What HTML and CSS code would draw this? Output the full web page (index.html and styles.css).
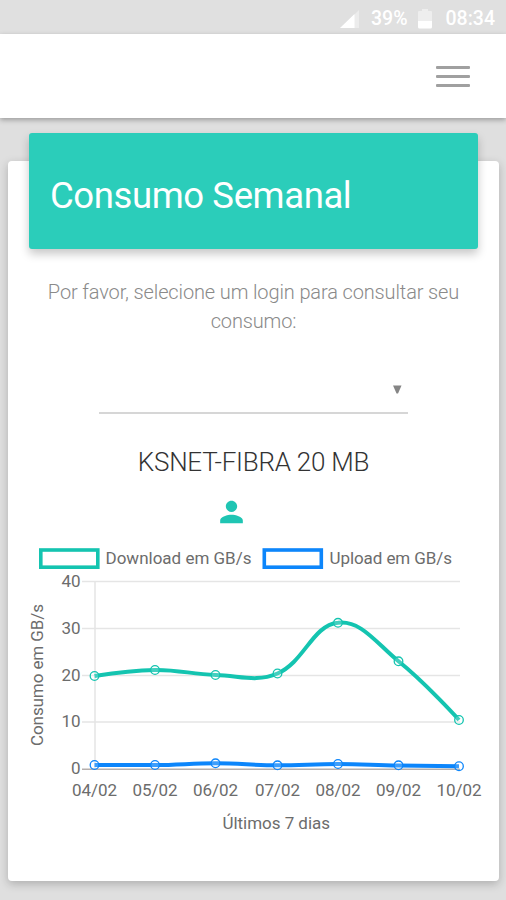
FILE: index.html
```html
<!DOCTYPE html>
<html lang="pt-BR">
<head>
<meta charset="utf-8">
<title>Consumo Semanal</title>
<link rel="stylesheet" href="styles.css">
</head>
<body>
<header class="status">
  <svg class="signal" width="20" height="20" viewBox="0 0 20 20"><path d="M19 1V19H1Z" fill="#ececec"/><path d="M14.500 5V19H0Z" fill="#fff"/></svg>
  <span class="battery-text">39%</span>
  <svg class="battery" width="14" height="20" viewBox="0 0 14 20"><path d="M4 0h6v2h3a1 1 0 0 1 1 1v9H0V3a1 1 0 0 1 1-1h3z" fill="#eee"/><path d="M0 12h14v6a1.500 1.500 0 0 1-1.500 1.500h-11A1.500 1.500 0 0 1 0 18z" fill="#fff"/></svg>
  <span class="clock">08:34</span>
</header>
<nav class="navbar">
  <button class="menu" aria-label="Menu"><span></span><span></span><span></span></button>
</nav>
<main>
  <section class="card">
    <h1 class="banner"><span>Consumo Semanal</span></h1>
    <p class="hint">Por favor, selecione um login para consultar seu<br>consumo:</p>
    <div class="select"><svg width="9" height="9" viewBox="0 0 9 9"><path d="M0 .5h8.500L5 8.500H3.500z" fill="#858585"/></svg></div>
    <h2 class="plan"><span>KSNET-FIBRA 20 MB</span></h2>
    <svg class="person" width="35" height="34" viewBox="0 0 24 24"><path fill="#1fc5b3" d="M12 12c2.210 0 4-1.790 4-4s-1.790-4-4-4-4 1.790-4 4 1.790 4 4 4zm0 2c-2.670 0-8 1.340-8 4v2h16v-2c0-2.660-5.330-4-8-4z"/></svg>
    <svg class="chart" width="470" height="300" viewBox="20 540 470 300">
      <g fill="#fff" stroke-width="3.600">
        <rect x="40.800" y="550" width="57" height="17.200" stroke="#14c4b0"/>
        <rect x="264.300" y="550" width="57" height="17.200" stroke="#0d86fb"/>
      </g>
      <g class="label">
        <text x="105.500" y="564" textLength="146">Download em GB/s</text>
        <text x="329.500" y="564" textLength="122.500">Upload em GB/s</text>
        <text transform="translate(42.500 746) rotate(-90)" textLength="142">Consumo em GB/s</text>
        <text x="222.500" y="828.500" textLength="107.500">Últimos 7 dias</text>
      </g>
      <g class="grid">
        <path d="M82 581.500H460M82 628.500H460M82 675.500H460M82 722H460M95 581V769"/>
        <path class="zero" d="M82 769.300H460"/>
      </g>
      <g class="label end">
        <text x="80.500" y="586.500">40</text><text x="80.500" y="633.500">30</text><text x="80.500" y="680.500">20</text><text x="80.500" y="727">10</text><text x="80.500" y="774">0</text>
      </g>
      <g class="label mid">
        <text x="94.500" y="796">04/02</text><text x="155" y="796">05/02</text><text x="215.500" y="796">06/02</text><text x="277.500" y="796">07/02</text><text x="338" y="796">08/02</text><text x="398.500" y="796">09/02</text><text x="459" y="796">10/02</text>
      </g>
      <g class="series" stroke="#0d86fb">
        <path d="M94.500 765L155 765C179 765 191 763.300 215.500 763.300S253 765.300 277.500 765.300S313 764 338 764S374 765.200 398.500 765.400L459 766.200"/>
        <g class="dots"><circle cx="94.500" cy="765" r="4.300"/><circle cx="155" cy="765" r="4.300"/><circle cx="215.500" cy="763.300" r="4.300"/><circle cx="277.500" cy="765.300" r="4.300"/><circle cx="338" cy="764" r="4.300"/><circle cx="398.500" cy="765.300" r="4.300"/><circle cx="459" cy="766.200" r="4.300"/></g>
      </g>
      <g class="series" stroke="#14c4b0">
        <path d="M94.500 676C94.500 676 130.700 670.200 155 669.900S191.500 674.300 215.700 675C240.400 675.700 255.800 682.600 277.500 673.500C304.600 661.600 312.500 625.100 338 622.800C361.100 620.100 376.200 643 398.500 661.300C424.600 682.100 459 720 459 720"/>
        <g class="dots"><circle cx="94.500" cy="676" r="4.300"/><circle cx="155" cy="670" r="4.300"/><circle cx="215.500" cy="675" r="4.300"/><circle cx="277.500" cy="673.500" r="4.300"/><circle cx="338" cy="622.800" r="4.300"/><circle cx="398.500" cy="661.300" r="4.300"/><circle cx="459" cy="720" r="4.300"/></g>
      </g>
    </svg>
  </section>
</main>
</body>
</html>
```
FILE: styles.css
```css
* { box-sizing: border-box; }
body { margin: 0; height: 900px; overflow: hidden; background: #dfdfdf; font-family: Roboto, sans-serif; }
.status { height: 34px; background: #e0e0e0; color: #fff; display: flex; align-items: center; justify-content: flex-end; padding: 3px 11px 0 0; font-size: 19.500px; font-weight: 500; }
.signal { margin-right: 11px; }
.battery { margin: 0 14px 0 10px; }
.navbar { position: relative; height: 84px; background: #fff; box-shadow: 0 2px 5px rgba(0,0,0,.3); display: flex; justify-content: flex-end; align-items: center; padding: 1px 36px 0 0; }
.menu { width: 34px; padding: 0; border: 0; background: none; display: grid; gap: 6px; }
.menu span { height: 3px; background: #a0a0a0; border-radius: 1px; }
main { padding: 43px 7px 0 8px; }
.card { height: 720px; background: #fff; border-radius: 4px; box-shadow: 0 3px 10px rgba(0,0,0,.22); display: flex; flex-direction: column; align-items: center; }
.banner { align-self: stretch; flex: none; height: 116px; margin: -28px 21px 0; padding: 8px 0 0 21px; border-radius: 3px; background: #2bcdba; color: #fff; box-shadow: 0 5px 10px rgba(0,0,0,.22); display: flex; align-items: center; font-size: 36.500px; font-weight: 400; letter-spacing: -.4px; }
.hint { margin: 29px 0 0; color: #8a8a8a; text-align: center; font-size: 20px; font-weight: 300; line-height: 29px; letter-spacing: -.130px; white-space: nowrap; }
.select { width: 309px; height: 36px; margin-top: 42px; border-bottom: 2px solid #d6d6d6; display: flex; justify-content: flex-end; padding: 7px 6px 0 0; }
.plan { margin: 32px 0 0; font-size: 26px; line-height: 32px; font-weight: 300; letter-spacing: -.250px; color: #333; white-space: nowrap; }
.person { margin: 17px 44px 0 0; flex: none; }
.chart { margin: 11px 0 0 3px; flex: none; }
.label { font-size: 17px; fill: #6c6c6c; }
.end { text-anchor: end; }
.mid { text-anchor: middle; }
.grid path { stroke: #e5e5e5; stroke-width: 1.500; fill: none; }
.grid .zero { stroke: #b5afad; }
.series { fill: none; stroke-width: 4; }
.dots { stroke-width: 1.300; fill: rgba(255,255,255,.2); }
```
